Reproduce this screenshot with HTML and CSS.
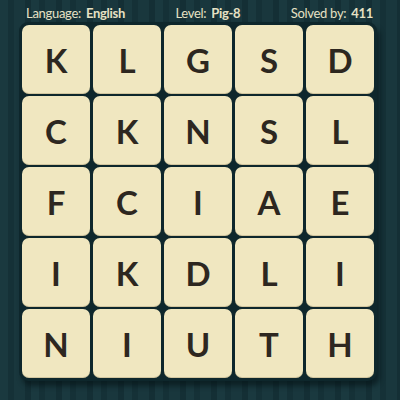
FILE: index.html
```html
<!DOCTYPE html>
<html>
<head>
<meta charset="utf-8">
<link rel="stylesheet" href="styles.css">
</head>
<body>
<div class="page">
  <div class="header">
    <span>Language: <b>English</b></span>
    <span>Level: <b>Pig-8</b></span>
    <span>Solved by: <b>411</b></span>
  </div>
  <div class="board">
    <div class="tile">K</div><div class="tile">L</div><div class="tile">G</div><div class="tile">S</div><div class="tile">D</div>
    <div class="tile">C</div><div class="tile">K</div><div class="tile">N</div><div class="tile">S</div><div class="tile">L</div>
    <div class="tile">F</div><div class="tile">C</div><div class="tile">I</div><div class="tile">A</div><div class="tile">E</div>
    <div class="tile">I</div><div class="tile">K</div><div class="tile">D</div><div class="tile">L</div><div class="tile">I</div>
    <div class="tile">N</div><div class="tile">I</div><div class="tile">U</div><div class="tile">T</div><div class="tile">H</div>
  </div>
</div>
</body>
</html>
```
FILE: styles.css
```css
html, body {
  margin: 0;
  padding: 0;
}
body {
  width: 400px;
  height: 400px;
  overflow: hidden;
  background-color: #17343a;
  background-image: repeating-linear-gradient(90deg,
    #1a393f 0px, #1a393f 8px,
    #153137 8px, #153137 14px,
    #19373d 14px, #19373d 25px,
    #142f35 25px, #142f35 31px);
  font-family: Lato, "Liberation Sans", sans-serif;
}
.page {
  display: flex;
  flex-direction: column;
  align-items: flex-start;
}
.header {
  box-sizing: border-box;
  width: 400px;
  height: 22px;
  padding: 3px 27px 0 26px;
  display: flex;
  justify-content: space-between;
  align-items: center;
  color: #e6e1c4;
  font-size: 13px;
  letter-spacing: -0.3px;
}
.header b {
  font-weight: 700;
  margin-left: 2px;
}
.board {
  margin: 0 0 0 19px;
  padding: 3px;
  background: #0e272c;
  border-radius: 9px;
  box-shadow: 3px 5px 5px rgba(5, 18, 21, 0.6);
  display: grid;
  grid-template-columns: repeat(5, 68px);
  grid-auto-rows: 69px;
  column-gap: 3px;
  row-gap: 2px;
}
.tile {
  background: #f0e7c0;
  border-radius: 7px;
  display: flex;
  align-items: center;
  justify-content: center;
  color: #2d2720;
  font-size: 33px;
  font-weight: 700;
  box-shadow: inset 0 -1px 0 rgba(120, 100, 60, 0.25);
}
```
